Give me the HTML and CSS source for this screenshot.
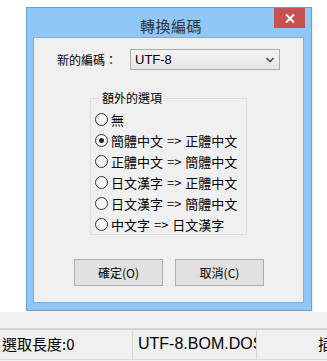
FILE: index.html
```html
<!DOCTYPE html>
<html lang="zh-Hant">

<head>
    <meta charset="UTF-8">
    <meta name="viewport" content="width=device-width, initial-scale=1.0">
    <title>轉換編碼</title>
    <link rel="stylesheet" href="styles.css">
</head>

<body>
    <!-- Área del editor con el diálogo encima -->
    <div class="editor">
        <div class="dialog">
            <div class="titlebar">
                <span class="title">轉換編碼</span>
                <span class="close-btn">
                    <svg width="10" height="9" viewBox="0 0 10 9">
                        <path d="M1 0.5 L9 8.5 M9 0.5 L1 8.5" stroke="#fff" stroke-width="2" fill="none"/>
                    </svg>
                </span>
            </div>

            <div class="client">
                <div class="encoding-row">
                    <label>新的編碼：</label>
                    <div class="select">
                        <span>UTF-8</span>
                        <svg width="8" height="6" viewBox="0 0 8 6">
                            <path d="M0.5 1 L4 4.5 L7.5 1" stroke="#555" stroke-width="1.6" fill="none"/>
                        </svg>
                    </div>
                </div>

                <fieldset class="options">
                    <legend>額外的選項</legend>
                    <div class="radio-row"><span class="radio"></span>無</div>
                    <div class="radio-row"><span class="radio checked"></span>簡體中文 =&gt; 正體中文</div>
                    <div class="radio-row"><span class="radio"></span>正體中文 =&gt; 簡體中文</div>
                    <div class="radio-row"><span class="radio"></span>日文漢字 =&gt; 正體中文</div>
                    <div class="radio-row"><span class="radio"></span>日文漢字 =&gt; 簡體中文</div>
                    <div class="radio-row"><span class="radio"></span>中文字 =&gt; 日文漢字</div>
                </fieldset>

                <div class="buttons">
                    <button>確定(O)</button>
                    <button>取消(C)</button>
                </div>
            </div>
        </div>
    </div>

    <!-- Barra de estado -->
    <div class="statusbar">
        <div class="status-cell first">選取長度:0</div>
        <div class="status-cell second">UTF-8.BOM.DOS</div>
        <div class="status-cell third">插入</div>
    </div>
</body>

</html>
```

FILE: styles.css
```css
/* Estilos generales */
* {
    box-sizing: border-box;
    margin: 0;
    padding: 0;
}

body {
    font-family: "Noto Sans CJK TC", "Liberation Sans", sans-serif;
    background-color: #fff;
    width: 327px;
    height: 361px;
    overflow: hidden;
    color: #000;
}

.editor {
    height: 312px;
    padding-top: 7px;
    padding-left: 26px;
}

/* Ventana del diálogo */
.dialog {
    width: 286px;
    height: 304px;
    background-color: #8fc7f6;
    border: 1px solid #6a9fce;
    box-shadow: 1px 1px 2px rgba(0, 0, 0, 0.08);
    display: flex;
    flex-direction: column;
}

.titlebar {
    height: 29px;
    display: flex;
    align-items: flex-start;
    justify-content: center;
    position: relative;
}

.title {
    font-size: 15px;
    line-height: 29px;
    padding-top: 3px;
    color: #333;
    letter-spacing: 0.5px;
    padding-left: 4px;
}

.close-btn {
    position: absolute;
    top: 0;
    right: 6px;
    width: 31px;
    height: 20px;
    background-color: #c75050;
    display: flex;
    align-items: center;
    justify-content: center;
}

.client {
    flex: 1;
    margin: 0 7px 7px 6px;
    background-color: #f0f0f0;
    border: 1px solid #7fb0dc;
    padding: 11px 0 0 23px;
}

.encoding-row {
    display: flex;
    align-items: center;
    height: 21px;
}

.encoding-row label {
    font-size: 12px;
    width: 73px;
}

.select {
    width: 150px;
    height: 21px;
    border: 1px solid #acacac;
    background: linear-gradient(#f2f2f2, #e6e6e6);
    display: flex;
    align-items: center;
    justify-content: space-between;
    padding: 0 5px 0 4px;
    font-family: "Liberation Sans", sans-serif;
    font-size: 13px;
}

/* Grupo de opciones */
.options {
    margin: 21px 0 0 33px;
    width: 157px;
    height: 144px;
    border: 1px solid #dcdcdc;
    padding: 4px 0 0 4px;
}

.options legend {
    font-size: 12px;
    margin-left: 4px;
    padding: 0 3px;
    line-height: 14px;
}

.radio-row {
    display: flex;
    align-items: center;
    height: 21px;
    font-size: 13px;
    white-space: nowrap;
    word-spacing: 1px;
}

.radio {
    width: 13px;
    height: 13px;
    border: 1px solid #333;
    border-radius: 50%;
    background: linear-gradient(#fcfcfc, #f4f4f4);
    margin-right: 3px;
    display: flex;
    align-items: center;
    justify-content: center;
}

.radio.checked::after {
    content: "";
    width: 5px;
    height: 5px;
    border-radius: 50%;
    background-color: #222;
}

/* Botones */
.buttons {
    display: flex;
    gap: 12px;
    margin: 24px 0 0 17px;
}

button {
    width: 89px;
    height: 27px;
    border: 1px solid #adadad;
    background-color: #e1e1e1;
    font-family: "Noto Sans CJK TC", "Liberation Sans", sans-serif;
    font-size: 12px;
    color: #000;
}

/* Barra de estado */
.statusbar {
    height: 49px;
    background-color: #f0f0f0;
    padding-top: 16px;
    display: flex;
}

.status-cell {
    height: 32px;
    border-top: 2px solid #d6d6d6;
    border-bottom: 1px solid #dadada;
    font-size: 15px;
    line-height: 28px;
    white-space: nowrap;
    overflow: hidden;
    border-right: 1px solid #d4d4d4;
}

.status-cell.first {
    width: 133px;
    padding-left: 2px;
}

.status-cell.second {
    width: 124px;
    padding-left: 5px;
    font-family: "Liberation Sans", sans-serif;
    font-size: 16px;
}

.status-cell.third {
    width: 70px;
    border-right: none;
    padding-left: 61px;
}
```
